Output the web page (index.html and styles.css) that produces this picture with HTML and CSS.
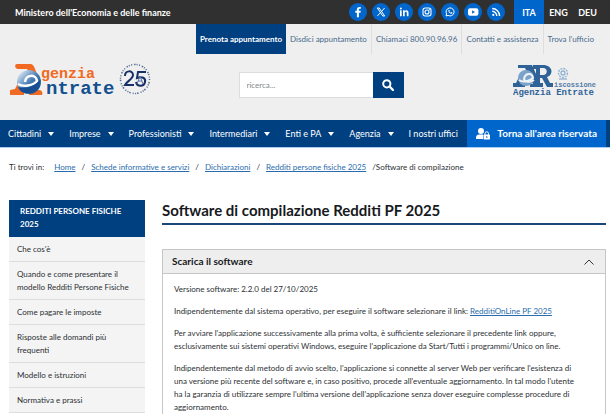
FILE: index.html
```html
<!DOCTYPE html>
<html lang="it">
<head>
<meta charset="utf-8">
<meta name="viewport" content="width=device-width, initial-scale=1">
<title>Software di compilazione Redditi PF 2025</title>
<link rel="stylesheet" href="styles.css">
</head>
<body>
<div class="topbar">
  <a class="ministry" href="#">Ministero dell'Economia e delle finanze</a>
  <div class="social">
    <a href="#" aria-label="Facebook"><svg viewBox="0 0 18 18"><path d="M9.9 14.2V9.7h1.6l.3-1.9H9.9V6.7c0-.6.3-1 1-1h.9V4.1c-2.4-.4-3.9.3-3.9 2.4v1.3H6.3v1.9h1.6v4.5z" fill="#fff"/></svg></a>
    <a href="#" aria-label="X"><svg viewBox="0 0 18 18"><path d="M5.3 5h1.9l5.5 8h-1.9zM12.6 5 5.4 13" fill="none" stroke="#fff" stroke-width="1"/></svg></a>
    <a href="#" aria-label="LinkedIn"><svg viewBox="0 0 18 18"><path d="M5 7.3h1.7v5.9H5zM8 7.3h1.6v.9c1-1.6 3.9-1.3 3.9 1.5v3.5h-1.7V10c0-1.800-2.100-1.600-2.100 0v3.200H8z" fill="#fff"/><circle cx="5.850" cy="5.400" r="1" fill="#fff"/></svg></a>
    <a href="#" aria-label="Instagram"><svg viewBox="0 0 18 18"><g fill="none" stroke="#fff" stroke-width="1.100"><rect x="5" y="5" width="8" height="8" rx="2.200"/><circle cx="9" cy="9" r="2"/></g><circle cx="11.300" cy="6.700" r=".6" fill="#fff"/></svg></a>
    <a href="#" aria-label="WhatsApp"><svg viewBox="0 0 18 18"><path d="M5 13l.6-2.100a4 4 0 1 1 1.500 1.500z" fill="none" stroke="#fff" stroke-width="1"/><path d="M7.500 7c.6-.7.9 0 1.200.8l-.4.6c.4.7.8 1 1.500 1.300l.5-.6 1.200.6c-.1 1.200-1.200 1.300-2.100.9C8.200 10 6.800 8.400 7.500 7z" fill="#fff"/></svg></a>
    <a href="#" aria-label="YouTube"><svg viewBox="0 0 18 18"><rect x="4" y="5.300" width="10.400" height="7.400" rx="2" fill="#fff"/><path d="M8.100 7.300v3.400L11 9z" fill="#06c"/></svg></a>
    <a href="#" aria-label="RSS"><svg viewBox="0 0 18 18"><circle cx="6.300" cy="11.900" r="1.100" fill="#fff"/><path d="M5.200 8.300a4.600 4.600 0 0 1 4.600 4.600M5.200 5.500a7.400 7.400 0 0 1 7.400 7.400" fill="none" stroke="#fff" stroke-width="1.400"/></svg></a>
  </div>
  <div class="langs"><a class="current" href="#">ITA</a><a href="#">ENG</a><a href="#">DEU</a></div>
</div>
<header class="header">
  <div class="quick">
    <a class="book" href="#">Prenota appuntamento</a><a href="#">Disdici appuntamento</a><a href="#">Chiamaci 800.90.96.96</a><a href="#">Contatti e assistenza</a><a href="#">Trova l'ufficio</a>
  </div>
  <div class="brand">
    <a class="logo" href="#" aria-label="Agenzia Entrate">
      <svg width="144" height="36" viewBox="0 0 144 36">
        <defs><linearGradient id="ball" x1="0" y1="0" x2="1" y2="1"><stop offset="0" stop-color="#fff"/><stop offset=".5" stop-color="#4a7fb8"/><stop offset="1" stop-color="#083f7e"/></linearGradient></defs>
        <path d="M8 2h13c3 0 4 2 5 5l4 10-8-3-4-7h-9c-3 0-4-5-1-5zM1 28l5-1 4-8 5 2-3 7 3 1v4H1zM22 28h7c4 0 5 2 4 5H20z" fill="#f26a21"/>
        <circle cx="20" cy="20" r="12" fill="url(#ball)"/>
        <path d="M9 22c5 3 15 2 19-3-1-7-11-7-12 1" fill="none" stroke="#fff" stroke-width="2.500"/>
        <path d="M9 25c7 2 16 0 22-7 1 14-18 18-22 7z" fill="#164e91"/>
        <text class="logo-mono" x="32" y="16" font-size="15" fill="#f26a21">genzia</text>
        <text class="logo-mono" x="37" y="32" font-size="19" fill="#14508f">ntrate</text>
        <circle cx="126" cy="17" r="14.500" fill="none" stroke="#51698f" stroke-width="1.500" stroke-dasharray="1 2 1.500 1 1 1.500"/>
        <g fill="none" stroke="#172e66" stroke-width="2"><path d="M116 14c0-6 8-6 8-1 0 4-6 6-8 10h9M137 10h-8l-1 6c5-2 9 0 8 4-1 5-8 5-9 0"/></g>
        <path d="M128 22l3-8 3 8M129 19h4" fill="none" stroke="#5373a4" stroke-width="1"/>
      </svg>
    </a>
    <form class="search"><input type="search" aria-label="Cerca nel sito" placeholder="ricerca..."><button type="button" aria-label="Cerca"><svg width="12" height="12" viewBox="0 0 12 12"><circle cx="4.800" cy="4.800" r="3.600" fill="none" stroke="#fff" stroke-width="2"/><path d="M7.500 7.500 11 11" stroke="#fff" stroke-width="2.400" stroke-linecap="round"/></svg></button></form>
    <a class="logo" href="#" aria-label="Agenzia Entrate Riscossione">
      <svg width="83" height="36" viewBox="0 0 83 36">
        <path d="M5 3h14l8 18h3v4H17v-3h3L12 6H5zM0 21h3l4-8 4 2-3 7h4v3H0z" fill="#2f6398"/>
        <path fill-rule="evenodd" d="M20 3h10c10 0 11 10 4 12l3 6h3v4h-6l-5-9h-2v5h3v4h-9v-4h2V7h-3zM27 6v7h3c5 0 5-7 0-7z" fill="#2f6398"/>
        <circle cx="13" cy="16" r="8" fill="#7da2c9"/><path d="M6 18c4 3 11 1 14-2-1-6-8-5-9 1 1 3 6 4 10 1" fill="none" stroke="#edf3f9" stroke-width="2"/>
        <g fill="none" stroke="#92b1d2" stroke-width="1.300"><circle cx="50" cy="11" r="4.500" stroke-dasharray="2 1"/><circle cx="50" cy="11" r="2"/><path d="M46 17h8"/></g>
        <text class="logo-mono" x="41" y="25" font-size="7" fill="#557da8">iscossione</text>
        <text class="logo-mono" x="0" y="33" font-size="9" fill="#2f6398">Agenzia Entrate</text>
      </svg>
    </a>
  </div>
</header>
<nav class="mainnav" aria-label="Principale">
  <a class="drop" href="#">Cittadini</a><a class="drop" href="#">Imprese</a><a class="drop" href="#">Professionisti</a><a class="drop" href="#">Intermediari</a><a class="drop" href="#">Enti e PA</a><a class="drop" href="#">Agenzia</a><a href="#">I nostri uffici</a>
  <a class="reserved" href="#"><svg width="14" height="12" viewBox="0 0 14 12"><circle cx="5" cy="3" r="3" fill="#fff"/><path d="M0 11V9.500C0 7.500 1.500 6.500 3 6.500h4v4.500z" fill="#fff"/><rect x="7.500" y="6.500" width="6.500" height="5" rx=".7" fill="#fff"/><path d="M9 7V5.500a1.750 1.750 0 0 1 3.500 0V7" fill="none" stroke="#fff"/><circle cx="10.750" cy="9" r=".8" fill="#06c"/></svg>Torna all'area riservata</a>
</nav>
<nav class="crumbs" aria-label="Percorso">
  <span class="where">Ti trovi in:</span><a href="#">Home</a><span class="sep">/</span><a href="#">Schede informative e servizi</a><span class="sep">/</span><a href="#">Dichiarazioni</a><span class="sep">/</span><a href="#">Redditi persone fisiche 2025</a><span class="last">/Software di compilazione</span>
</nav>
<div class="content">
  <aside class="side">
    <h2>REDDITI PERSONE FISICHE 2025</h2>
    <a href="#">Che cos'è</a>
    <a href="#">Quando e come presentare il modello Redditi Persone Fisiche</a>
    <a href="#">Come pagare le imposte</a>
    <a href="#">Risposte alle domandi più frequenti</a>
    <a href="#">Modello e istruzioni</a>
    <a href="#">Normativa e prassi</a>
  </aside>
  <main>
    <h1>Software di compilazione Redditi PF 2025</h1>
    <section class="panel">
      <h2><button type="button" aria-expanded="true">Scarica il software<svg width="10" height="6" viewBox="0 0 10 6"><path d="M.5 5.500 5 1l4.500 4.500" fill="none" stroke="#333"/></svg></button></h2>
      <div class="text">
        <p>Versione software: 2.2.0 del 27/10/2025</p>
        <p>Indipendentemente dal sistema operativo, per eseguire il software selezionare il link: <a href="#">RedditiOnLine PF 2025</a></p>
        <p>Per avviare l'applicazione successivamente alla prima volta, è sufficiente selezionare il precedente link oppure, esclusivamente sui sistemi operativi Windows, eseguire l'applicazione da Start/Tutti i programmi/Unico on line.</p>
        <p>Indipendentemente dal metodo di avvio scelto, l'applicazione si connette al server Web per verificare l'esistenza di una versione più recente del software e, in caso positivo, procede all'eventuale aggiornamento. In tal modo l'utente ha la garanzia di utilizzare sempre l'ultima versione dell'applicazione senza dover eseguire complesse procedure di aggiornamento.</p>
      </div>
    </section>
  </main>
</div>
</body>
</html>
```
FILE: styles.css
```css
* { box-sizing: border-box; }
body { margin: 0; background: #fff; color: #2c2f33; font: 8px/13px Lato, "Liberation Sans", sans-serif; }
a { color: inherit; text-decoration: none; }
h1, h2, p { margin: 0; }
svg { display: block; flex: none; }

.topbar { display: flex; height: 24px; background: #303030; color: #fff; align-items: center; padding: 0 8px 0 15px; }
.ministry { font-size: 9px; font-weight: bold; margin-right: auto; }
.social { display: flex; gap: 5px; margin-right: 9px; }
.social a { width: 18px; height: 18px; border-radius: 50%; background: #06c; }
.langs { display: flex; align-self: stretch; font-size: 9px; font-weight: bold; }
.langs a { width: 29px; display: flex; align-items: center; justify-content: center; }
.langs .current { width: 30px; background: #06c; }

.header { background: #efefef; height: 96px; }
.quick { display: flex; justify-content: flex-end; padding-right: 12px; color: #47698b; }
.quick a { height: 30px; padding: 0 4px; display: flex; align-items: center; border-left: 1px solid #dedede; }
.quick .book { background: #003f80; color: #fff; font-weight: bold; border: 0; }
.quick .book + a { border: 0; }
.brand { display: flex; justify-content: space-between; align-items: flex-start; padding: 8px 14px 0 9px; }
.logo-mono { font-family: "Liberation Mono", monospace; font-weight: bold; }
.search { display: flex; width: 165px; height: 26px; margin: 10px 0 0 -24px; }
.search input { flex: 1; min-width: 0; border: 1px solid #ddd; border-right: 0; background: #fff; padding: 0 7px; font: inherit; border-radius: 0; }
.search input::placeholder { color: #888; }
.search button { width: 31px; border: 0; padding: 0; background: #003f80; display: flex; align-items: center; justify-content: center; }

.mainnav { display: flex; align-items: stretch; height: 28px; background: #003f80; border-bottom: 1px solid #a9cdf2; color: #fff; font-size: 9px; padding: 0 4px 0 8px; }
.mainnav a { display: flex; align-items: center; margin-right: 15px; white-space: nowrap; }
.mainnav a:nth-last-child(2) { margin-right: 8px; }
.mainnav .drop::after { content: ""; border: 3px solid transparent; border-top: 4px solid #fff; border-bottom: 0; margin-left: 7px; }
.mainnav .reserved { background: #06c; margin: 0 0 0 auto; padding: 0 9px; gap: 7px; font-size: 10px; font-weight: bold; }

.crumbs { display: flex; padding: 13px 9px 0; height: 52px; }
.crumbs a, .text a { color: #2a6cae; text-decoration: underline; }
.where { margin-right: 10px; }
.sep { margin: 0 6px; }
.last { margin-left: 6px; }

.content { display: flex; gap: 17px; padding: 0 4px 0 9px; align-items: flex-start; }
.side { width: 136px; flex: none; background: #f4f4f4; }
.side h2 { font-size: 8px; line-height: 13px; color: #fff; background: #003f80; padding: 5px 11px 6px; }
.side a { display: block; padding: 6px 8px 5px; border-bottom: 1px solid #ddd; }
main { flex: 1; min-width: 0; }
h1 { font-size: 15px; line-height: 20px; color: #17191c; font-weight: bold; padding-bottom: 3px; border-bottom: 2px solid #1b4478; }
.panel { margin-top: 24px; border: 1px solid #c6c6c6; border-bottom: 0; }
.panel button { width: 100%; height: 24px; display: flex; justify-content: space-between; align-items: center; background: #eee; border: 0; border-bottom: 1px solid #c6c6c6; padding: 0 11px 0 9px; font: bold 10px/13px Lato, sans-serif; color: #17191c; }
.text { padding: 9px 21px 0 11px; }
.text p { margin-bottom: 9px; }
```
